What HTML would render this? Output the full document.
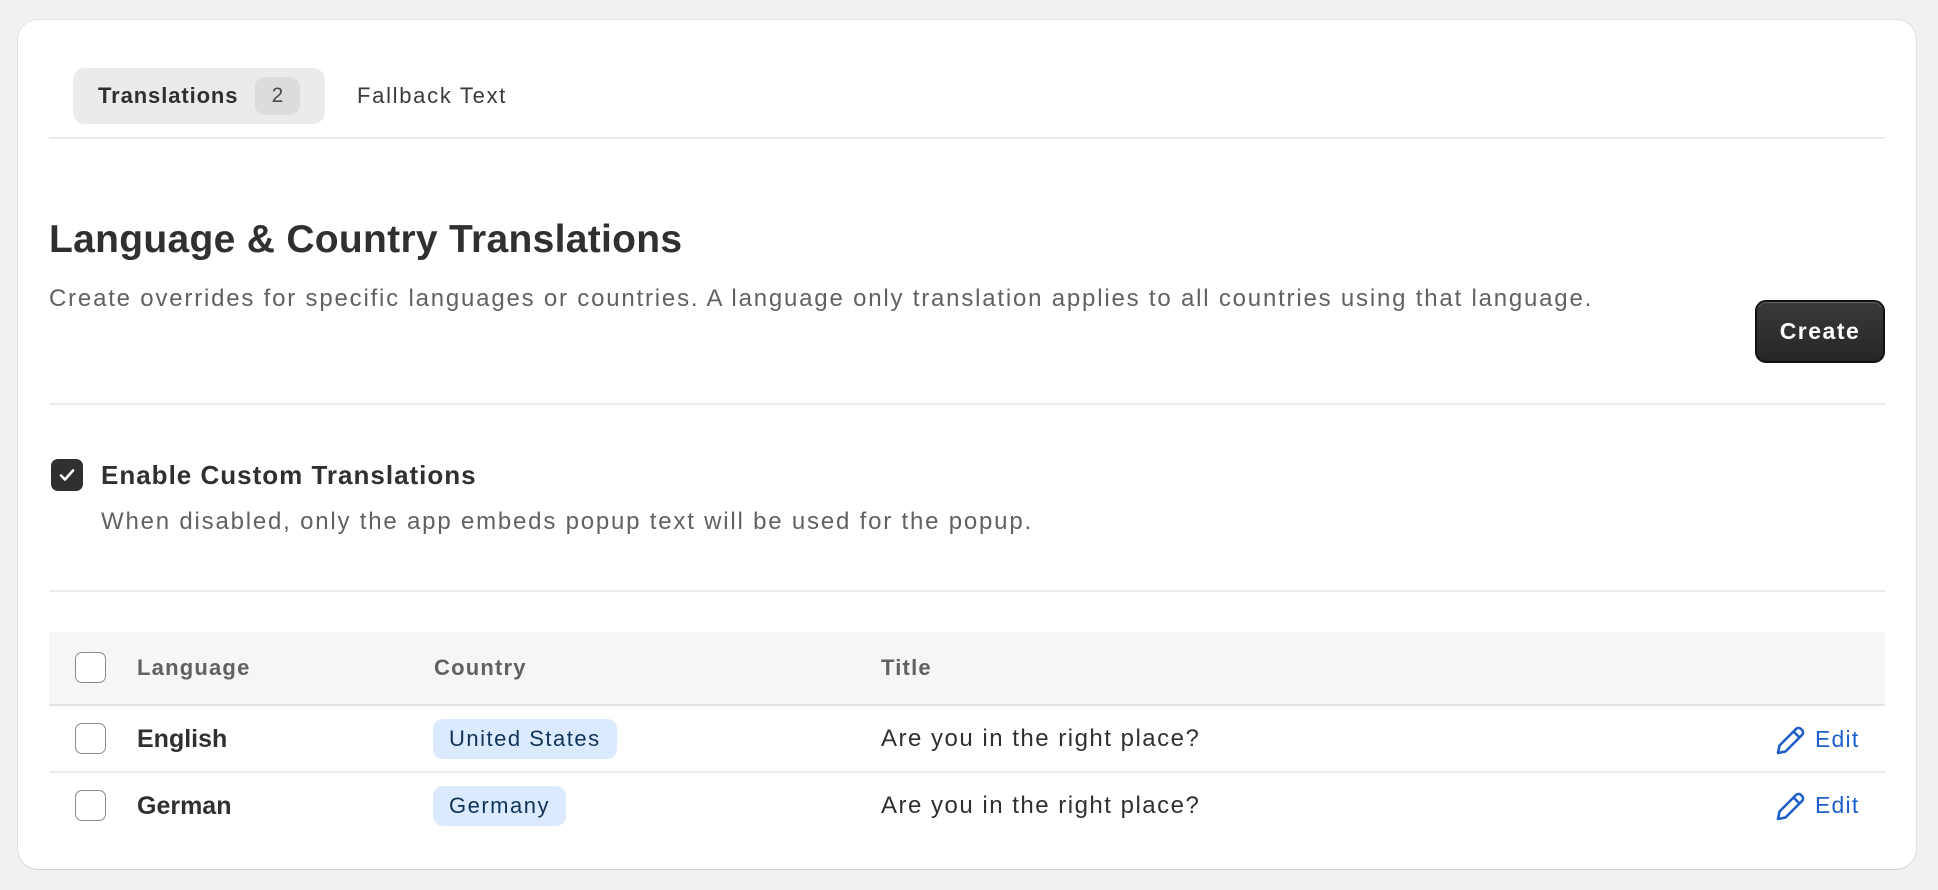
<!DOCTYPE html>
<html><head><meta charset="utf-8"><style>
*{margin:0;padding:0;box-sizing:border-box}
body{width:1938px;height:890px;background:#f1f1f1;font-family:"Liberation Sans",sans-serif;position:relative;overflow:hidden;color:#303030}
.card{position:absolute;left:18px;top:20px;width:1898px;height:849px;background:#fff;border-radius:20px;box-shadow:0 1px 0 #d0d0d0,0 0 0 1px #e3e3e3}
.a{position:absolute;white-space:nowrap}
.hr{position:absolute;left:49px;width:1836px;height:2px;background:#ebebeb}
.cb{position:absolute;width:31px;height:31px;border:1.5px solid #8a8a8a;border-radius:7px;background:#fff}
.badge{position:absolute;height:40px;border-radius:10px;background:#dbeafe;color:#0f3358;font-size:22px;line-height:40px;padding:0 16px;letter-spacing:1.5px}
.edit{position:absolute;color:#1f5fcc;font-size:23px;letter-spacing:1.2px}
.th{position:absolute;top:655px;font-size:22px;font-weight:bold;color:#616161;letter-spacing:1.2px}
.t{font-size:24px;letter-spacing:1.5px}
</style></head><body>
<div class="card"></div>
<div class="a" style="left:73px;top:68px;width:252px;height:56px;background:#ebebeb;border-radius:12px"></div>
<div class="a" style="left:98px;top:82px;font-size:22px;font-weight:bold;color:#303030;line-height:28px;letter-spacing:0.9px">Translations</div>
<div class="a" style="left:255px;top:77px;width:45px;height:38px;background:#dcdcdc;border-radius:10px;text-align:center;line-height:38px;font-size:21px;color:#4a4a4a">2</div>
<div class="a" style="left:357px;top:82px;font-size:22px;color:#3a3a3a;line-height:28px;letter-spacing:1.7px">Fallback Text</div>
<div class="hr" style="top:137px"></div>
<div class="a" style="left:49px;top:217px;font-size:39px;font-weight:bold;letter-spacing:0.3px;line-height:46px">Language &amp; Country Translations</div>
<div class="a" style="left:49px;top:285px;font-size:24px;color:#616161;line-height:28px;letter-spacing:1.8px">Create overrides for specific languages or countries. A language only translation applies to all countries using that language.</div>
<div class="a" style="left:1755px;top:300px;width:130px;height:63px;background:linear-gradient(#3a3a3a,#262626);border:2px solid #111;border-radius:11px;color:#fff;font-size:23px;font-weight:bold;text-align:center;line-height:59px;box-shadow:inset 0 1px 0 #666;letter-spacing:1.5px">Create</div>
<div class="hr" style="top:403px"></div>
<div class="a" style="left:51px;top:459px;width:32px;height:32px;background:#303030;border-radius:7px"><svg width="32" height="32" viewBox="0 0 32 32"><path d="M10 16.5l4 4 8-9" stroke="#fff" stroke-width="2.6" fill="none" stroke-linecap="round" stroke-linejoin="round"/></svg></div>
<div class="a" style="left:101px;top:460px;font-size:26px;font-weight:bold;line-height:30px;letter-spacing:1px">Enable Custom Translations</div>
<div class="a" style="left:101px;top:508px;font-size:24px;color:#616161;line-height:28px;letter-spacing:1.8px">When disabled, only the app embeds popup text will be used for the popup.</div>
<div class="hr" style="top:590px"></div>
<div class="a" style="left:49px;top:632px;width:1836px;height:73px;background:#f6f6f6"></div>
<div class="hr" style="top:704px;background:#e3e3e3"></div>
<div class="hr" style="top:771px"></div>
<div class="cb" style="left:75px;top:652px"></div>
<div class="th" style="left:137px">Language</div>
<div class="th" style="left:434px">Country</div>
<div class="th" style="left:881px">Title</div>
<div class="cb" style="left:75px;top:723px"></div>
<div class="a" style="left:137px;top:725px;font-size:25px;font-weight:bold">English</div>
<div class="badge" style="left:433px;top:719px">United States</div>
<div class="a t" style="left:881px;top:725px">Are you in the right place?</div>
<div class="cb" style="left:75px;top:790px"></div>
<div class="a" style="left:137px;top:792px;font-size:25px;font-weight:bold">German</div>
<div class="badge" style="left:433px;top:786px">Germany</div>
<div class="a t" style="left:881px;top:792px">Are you in the right place?</div>
<svg class="a" style="left:1775px;top:724px" width="32" height="32" viewBox="0 0 32 32"><path d="M3 29l1.5-7.5L21 5a3.5 3.5 0 0 1 5 0l1 1a3.5 3.5 0 0 1 0 5L10.5 27.5z M18.5 7.5l6 6" stroke="#1f5fcc" stroke-width="2.6" fill="none" stroke-linejoin="round"/></svg>
<div class="edit" style="left:1815px;top:726px">Edit</div>
<svg class="a" style="left:1775px;top:790px" width="32" height="32" viewBox="0 0 32 32"><path d="M3 29l1.5-7.5L21 5a3.5 3.5 0 0 1 5 0l1 1a3.5 3.5 0 0 1 0 5L10.5 27.5z M18.5 7.5l6 6" stroke="#1f5fcc" stroke-width="2.6" fill="none" stroke-linejoin="round"/></svg>
<div class="edit" style="left:1815px;top:792px">Edit</div>
</body></html>
